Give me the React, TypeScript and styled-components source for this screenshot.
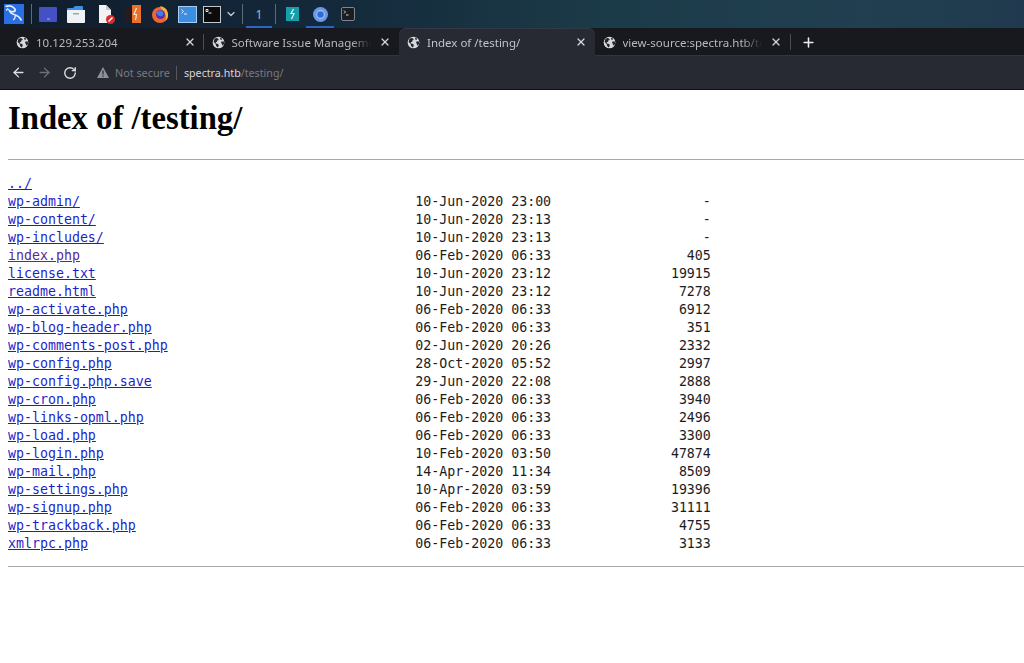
import styled, { createGlobalStyle } from "styled-components";
import { ArrowLeft, ArrowRight, RotateCw, X, Plus, ChevronDown } from "lucide-react";

const GlobalStyle = createGlobalStyle`
  html, body {
    margin: 0;
    padding: 0;
    background: #fff;
  }
`;

const Page = styled.div`
  width: 1024px;
  height: 663px;
  overflow: hidden;
  background: #fff;
`;

const Taskbar = styled.div`
  height: 28px;
  display: flex;
  align-items: center;
  padding-left: 4px;
  background: linear-gradient(90deg, #101c2b 0%, #13283a 30%, #1c3b49 60%, #213f50 85%, #20394e 100%);
`;

const Slot = styled.div<{ $ml?: number; $w?: number }>`
  display: flex;
  align-items: center;
  justify-content: center;
  flex: none;
  margin-left: ${(p) => p.$ml ?? 0}px;
  width: ${(p) => p.$w ?? 18}px;
  height: 28px;
`;

const Divider = styled.div<{ $ml: number }>`
  flex: none;
  width: 1px;
  height: 20px;
  margin-left: ${(p) => p.$ml}px;
  background: #5d6b78;
`;

const Workspace = styled(Slot)`
  color: #aeb7be;
  font: 12px "Noto Sans", sans-serif;
  border-bottom: 2px solid #2c64c4;
  box-sizing: border-box;
  padding-top: 2px;
`;

const TabStrip = styled.div`
  height: 28px;
  display: flex;
  padding-left: 8px;
  background: #17191f;
  box-shadow: inset 0 -1px 0 #32353e;
`;

const Tab = styled.div<{ $active?: boolean; $sep?: boolean }>`
  position: relative;
  flex: none;
  width: 195.5px;
  height: 28px;
  display: flex;
  align-items: center;
  box-sizing: border-box;
  padding: 0 7px 0 8px;
  border-radius: 7px 7px 0 0;
  color: ${(p) => (p.$active ? "#c2c4c8" : "#b7b9bd")};
  background: ${(p) => (p.$active ? "#272a33" : "transparent")};
  box-shadow: ${(p) => (p.$active ? "inset 0 1px 0 #363943" : "none")};

  &::after {
    content: "";
    display: ${(p) => (p.$sep ? "block" : "none")};
    position: absolute;
    right: 0;
    top: 6px;
    width: 1px;
    height: 16px;
    background: #4a4d55;
  }
`;

const TabTitle = styled.span`
  flex: 1;
  min-width: 0;
  margin: 0 8px 0 7px;
  white-space: nowrap;
  overflow: hidden;
  font: 11.5px "Noto Sans", sans-serif;
  mask-image: linear-gradient(90deg, #000 86%, transparent 100%);
`;

const TabClose = styled(X)`
  flex: none;
  margin-right: 1px;
  color: #d5d7da;
`;

const TabSeparator = styled.div`
  flex: none;
  width: 1px;
  height: 16px;
  align-self: center;
  background: #4a4d55;
`;

const NewTab = styled.div`
  flex: none;
  display: flex;
  align-items: center;
  margin-left: 10px;
  color: #eceded;
`;

const Toolbar = styled.div`
  height: 34px;
  box-sizing: border-box;
  display: flex;
  align-items: center;
  padding-left: 11px;
  background: #272a33;
  border-bottom: 1px solid #101115;
`;

const NavButton = styled.div<{ $ml?: number; $dim?: boolean }>`
  display: flex;
  margin-left: ${(p) => p.$ml ?? 0}px;
  color: ${(p) => (p.$dim ? "#6d7077" : "#dcdde0")};
`;

const NotSecure = styled.span`
  margin-left: 6px;
  font: 10.8px "Noto Sans", sans-serif;
  color: #777a81;
`;

const UrlDivider = styled.div`
  width: 1px;
  height: 14px;
  margin: 0 7px 0 6px;
  background: #55585f;
`;

const Url = styled.span`
  font: 10.7px "Noto Sans", sans-serif;
  color: #d6d7da;
`;

const UrlPath = styled.span`
  color: #777a81;
`;

const Content = styled.main`
  padding: 0 0 0 8px;
  color: #000;
`;

const Heading = styled.h1`
  margin: 0;
  padding-top: 10px;
  font: bold 32.7px/37px "Liberation Serif", serif;
`;

const Rule = styled.hr<{ $top: number }>`
  margin: ${(p) => p.$top}px 0 0;
  height: 1px;
  border: 0;
  background: #a9a9a9;
`;

const Listing = styled.pre`
  margin: 15px 0 13px;
  color: #1c1c1c;
  font: 13.27px/18px "DejaVu Sans Mono", monospace;
`;

const FileLink = styled.a<{ $visited?: boolean }>`
  color: ${(p) => (p.$visited ? "#5c2a8c" : "#1f1fc8")};
  text-decoration: underline;
`;

const Globe = () => (
  <svg width="13" height="13" viewBox="0 0 16 16">
    <circle cx="8" cy="8" r="7.2" fill="#d6d8db" />
    <path
      d="M3 3.500l2.600-.9 2.200.8.4 1.600-1.700.5-.2 1.700-1.700.5.2 1.500 2 .3 1.500 1.200-.2 2-1.400 1.500L5 11.900l-.5-2.200L2 7.500zM10 1.800l2.600 1.500-.6 1.400-1.900-.4zM11 7.200l3.300-.6.8 2.700-1.800 2.600-1.200-1.600z"
      fill="#22252c"
    />
  </svg>
);

const KaliLogo = () => (
  <svg width="20" height="20" viewBox="0 0 20 20">
    <rect width="20" height="20" fill="#2a6fe4" />
    <path
      d="M1.500 2.500c3-1 7-.5 9 2 1.200 1.500 1 3-1.500 3.200-1.500.1-2.500-.3-3.500-1 1.200 3 4 3.600 6 4.300 2.500.8 4.500 2.500 6 5.500"
      fill="none"
      stroke="#e2ecf7"
      strokeWidth="1.700"
    />
    <path d="M11 11.500c.5 2-.2 3.500-2 4.500M4 4.500L2 6.500" fill="none" stroke="#e2ecf7" strokeWidth="1.300" />
  </svg>
);

const DesktopIcon = () => (
  <svg width="18" height="15" viewBox="0 0 18 15">
    <rect width="18" height="15" rx="1" fill="#4351c4" />
    <rect x="8" y="11.500" width="3" height="1" fill="#aab3ee" />
  </svg>
);

const FolderIcon = () => (
  <svg width="18" height="17" viewBox="0 0 18 17">
    <path d="M0 3a1 1 0 011-1h5l2-2h7a1 1 0 011 1v3H0z" fill="#3f8fe0" />
    <path d="M0 4h18v12a1 1 0 01-1 1H1a1 1 0 01-1-1z" fill="#eef2f5" />
    <rect x="6" y="7" width="6" height="1.500" fill="#9da5ad" />
  </svg>
);

const DocIcon = () => (
  <svg width="18" height="19" viewBox="0 0 18 19">
    <path d="M2 0h7l5 5v13H2z" fill="#f2f2f2" />
    <path d="M9 0l5 5H9z" fill="#c9c9c9" />
    <circle cx="13.500" cy="14.500" r="4.500" fill="#d62c2c" />
    <path d="M11.500 16.500l4-4" stroke="#fff" strokeWidth="1.400" />
  </svg>
);

const BurpIcon = () => (
  <svg width="18" height="18" viewBox="0 0 18 18">
    <rect x="2" y="2" width="7" height="14" fill="#2a1a1e" />
    <rect x="9" width="9" height="18" fill="#e8722c" />
    <path d="M13.500 3l-2.500 6.500h2.500l-1 5.500" fill="none" stroke="#f7e3c8" strokeWidth="1.200" />
  </svg>
);

const FirefoxIcon = () => (
  <svg width="18" height="18" viewBox="0 0 18 18">
    <circle cx="9" cy="10" r="8" fill="#f0642d" />
    <path d="M9 1c4 1 7 2 8 8 .5 3-1 6-3 7 2-3 1-7-1-9-1-1.500-3-3-4-6z" fill="#fbb03b" />
    <circle cx="9.500" cy="9.500" r="4.500" fill="#5a2da8" />
    <path d="M5 8c1-2 4-3 6-2 2 1 2 4 0 5-2 .5-4 0-4.500-1.500z" fill="#3f7ee0" />
  </svg>
);

const BlueTerminal = () => (
  <svg width="19" height="17" viewBox="0 0 19 17">
    <rect x=".5" y=".5" width="18" height="16" fill="#3b8fe2" stroke="#a8cdf0" />
    <path d="M3.500 3.500l2 2-2 2M6 8h3" fill="none" stroke="#eaf3fb" strokeWidth="1" />
  </svg>
);

const BlackTerminal = () => (
  <svg width="18" height="17" viewBox="0 0 18 17">
    <rect x=".5" y=".5" width="17" height="16" fill="#0b0b0d" stroke="#c3c6ca" />
    <path d="M3 3.500h2v2H3zM5.500 7h3" fill="none" stroke="#e5e5e5" strokeWidth="1" />
  </svg>
);

const TealIcon = () => (
  <svg width="13" height="14" viewBox="0 0 13 14">
    <rect width="13" height="14" fill="#14a0a8" />
    <path d="M7.500 2L5 6.500h3L5.500 12" fill="none" stroke="#d9f5f5" strokeWidth="1.200" />
  </svg>
);

const ChromiumIcon = () => (
  <svg width="15" height="15" viewBox="0 0 16 16">
    <circle cx="8" cy="8" r="8" fill="#6a9ae6" />
    <circle cx="8" cy="8" r="4.700" fill="#a9c3ec" />
    <circle cx="8" cy="8" r="3.500" fill="#2f6bdc" />
  </svg>
);

const SmallTerminal = () => (
  <svg width="14" height="14" viewBox="0 0 14 14">
    <rect x=".5" y=".5" width="13" height="13" rx="1.500" fill="#1a1e23" stroke="#7f858b" />
    <path d="M3 3.500l1.500 1.500L3 6.500M5 8h2.500" fill="none" stroke="#d0d2d5" strokeWidth="1" />
  </svg>
);

const WarningIcon = () => (
  <svg width="12" height="11" viewBox="0 0 12 11">
    <path d="M6 0l6 11H0z" fill="#8f9196" />
    <path d="M6 3.500v4M6 8.500v1.200" stroke="#272a33" strokeWidth="1.200" />
  </svg>
);

const row = (name: string, date: string, size: string) =>
  " ".repeat(50 - name.length) + " " + date + size.padStart(20);

const files: { name: string; date: string; size: string; visited?: boolean }[] = [
  { name: "wp-admin/", date: "10-Jun-2020 23:00", size: "-" },
  { name: "wp-content/", date: "10-Jun-2020 23:13", size: "-" },
  { name: "wp-includes/", date: "10-Jun-2020 23:13", size: "-" },
  { name: "index.php", date: "06-Feb-2020 06:33", size: "405", visited: true },
  { name: "license.txt", date: "10-Jun-2020 23:12", size: "19915" },
  { name: "readme.html", date: "10-Jun-2020 23:12", size: "7278" },
  { name: "wp-activate.php", date: "06-Feb-2020 06:33", size: "6912" },
  { name: "wp-blog-header.php", date: "06-Feb-2020 06:33", size: "351" },
  { name: "wp-comments-post.php", date: "02-Jun-2020 20:26", size: "2332" },
  { name: "wp-config.php", date: "28-Oct-2020 05:52", size: "2997" },
  { name: "wp-config.php.save", date: "29-Jun-2020 22:08", size: "2888" },
  { name: "wp-cron.php", date: "06-Feb-2020 06:33", size: "3940" },
  { name: "wp-links-opml.php", date: "06-Feb-2020 06:33", size: "2496" },
  { name: "wp-load.php", date: "06-Feb-2020 06:33", size: "3300" },
  { name: "wp-login.php", date: "10-Feb-2020 03:50", size: "47874" },
  { name: "wp-mail.php", date: "14-Apr-2020 11:34", size: "8509" },
  { name: "wp-settings.php", date: "10-Apr-2020 03:59", size: "19396" },
  { name: "wp-signup.php", date: "06-Feb-2020 06:33", size: "31111" },
  { name: "wp-trackback.php", date: "06-Feb-2020 06:33", size: "4755" },
  { name: "xmlrpc.php", date: "06-Feb-2020 06:33", size: "3133" },
];

const tabs = [
  { title: "10.129.253.204", sep: true },
  { title: "Software Issue Management" },
  { title: "Index of /testing/", active: true },
  { title: "view-source:spectra.htb/testing/" },
];

function App() {
  return (
    <Page>
      <GlobalStyle />
      <Taskbar>
        <Slot $w={20}><KaliLogo /></Slot>
        <Divider $ml={7} />
        <Slot $ml={7}><DesktopIcon /></Slot>
        <Slot $ml={10}><FolderIcon /></Slot>
        <Slot $ml={12}><DocIcon /></Slot>
        <Slot $ml={8}><BurpIcon /></Slot>
        <Slot $ml={10}><FirefoxIcon /></Slot>
        <Slot $ml={9} $w={19}><BlueTerminal /></Slot>
        <Slot $ml={6}><BlackTerminal /></Slot>
        <Slot $ml={4} $w={12}><ChevronDown size={12} color="#c7ccd1" strokeWidth={2.5} /></Slot>
        <Divider $ml={5} />
        <Workspace $ml={3} $w={26}>1</Workspace>
        <Divider $ml={3} />
        <Slot $ml={10} $w={13}><TealIcon /></Slot>
        <Workspace $ml={7} $w={28}><ChromiumIcon /></Workspace>
        <Slot $ml={7} $w={14}><SmallTerminal /></Slot>
      </Taskbar>
      <TabStrip>
        {tabs.map((tab) => (
          <Tab key={tab.title} $active={tab.active} $sep={tab.sep}>
            <Globe />
            <TabTitle>{tab.title}</TabTitle>
            <TabClose size={12} strokeWidth={2.5} />
          </Tab>
        ))}
        <TabSeparator />
        <NewTab><Plus size={15} strokeWidth={2.5} /></NewTab>
      </TabStrip>
      <Toolbar>
        <NavButton><ArrowLeft size={15} strokeWidth={2.2} /></NavButton>
        <NavButton $ml={11} $dim><ArrowRight size={15} strokeWidth={2.2} /></NavButton>
        <NavButton $ml={11}><RotateCw size={14} strokeWidth={2.4} /></NavButton>
        <NavButton $ml={20}><WarningIcon /></NavButton>
        <NotSecure>Not secure</NotSecure>
        <UrlDivider />
        <Url>spectra.htb<UrlPath>/testing/</UrlPath></Url>
      </Toolbar>
      <Content>
        <Heading>Index of /testing/</Heading>
        <Rule $top={22} />
        <Listing>
          <FileLink href="#">../</FileLink>
          {"\n"}
          {files.map((file) => (
            <span key={file.name}>
              <FileLink href="#" $visited={file.visited}>{file.name}</FileLink>
              {row(file.name, file.date, file.size)}
              {"\n"}
            </span>
          ))}
        </Listing>
        <Rule $top={0} />
      </Content>
    </Page>
  );
}

export default App;
